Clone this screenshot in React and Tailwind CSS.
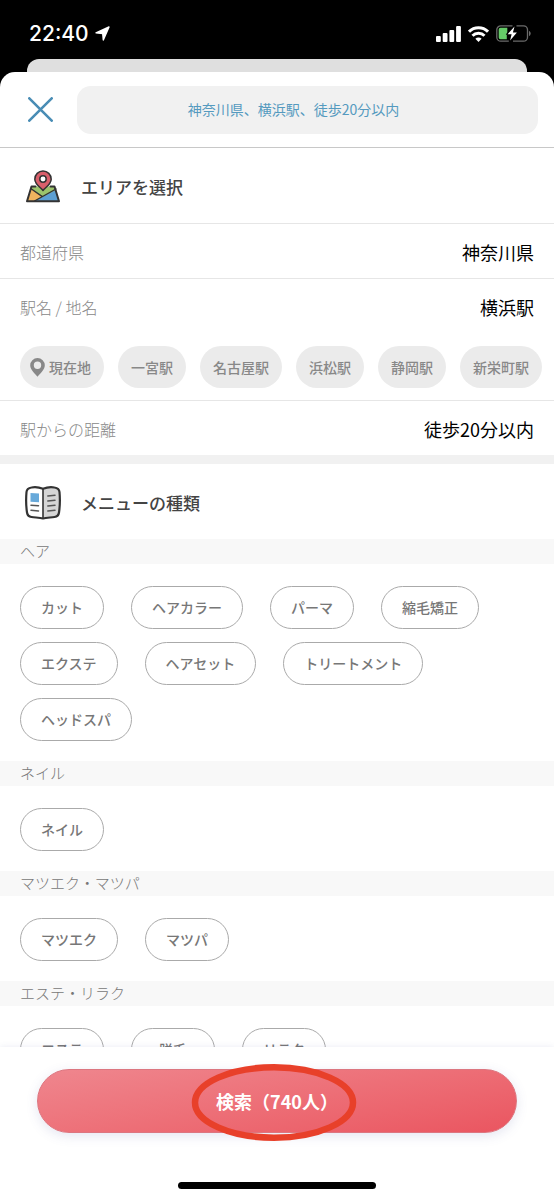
import { useState } from 'react'

const stations = ['一宮駅', '名古屋駅', '浜松駅', '静岡駅', '新栄町駅']

const menus = [
  { name: 'ヘア', items: ['カット', 'ヘアカラー', 'パーマ', '縮毛矯正', 'エクステ', 'ヘアセット', 'トリートメント', 'ヘッドスパ'] },
  { name: 'ネイル', items: ['ネイル'] },
  { name: 'マツエク・マツパ', items: ['マツエク', 'マツパ'] },
  { name: 'エステ・リラク', items: ['エステ', '脱毛', 'リラク'] },
]

function StatusBar() {
  return (
    <div className="h-[59px] shrink-0 flex items-center justify-between pl-[29px] pr-[23px] pt-2 text-white">
      <div className="flex items-center gap-1.5">
        <span className="font-['Inter',sans-serif] text-[21px] leading-6 font-medium">22:40</span>
        <svg width="15" height="15" viewBox="0 0 15 15" fill="currentColor" stroke="currentColor" strokeWidth="1.400" strokeLinejoin="round">
          <path d="M14 1L8.300 14 7.700 7.500 1 6.900z" />
        </svg>
      </div>
      <div className="flex items-center gap-[7px]">
        <svg width="25" height="16" viewBox="0 0 25 16" fill="currentColor">
          <rect x="0" y="10" width="4.800" height="6" rx="1" />
          <rect x="6.700" y="7" width="4.800" height="9" rx="1" />
          <rect x="13.400" y="4" width="4.800" height="12" rx="1" />
          <rect x="20.100" y="0" width="4.800" height="16" rx="1" />
        </svg>
        <svg width="21" height="16" viewBox="0 0 21 16" fill="none" stroke="currentColor" strokeWidth="3">
          <path d="M1 5.700a13.500 13.500 0 0 1 19 0" />
          <path d="M4.500 9.700a8.500 8.500 0 0 1 12 0" />
          <path d="M10.500 16l-3.100-3.200a4.300 4.300 0 0 1 6.200 0z" fill="currentColor" stroke="none" />
        </svg>
        <svg width="35" height="17" viewBox="0 0 35 17" fill="none">
          <path d="M16.500.8H4.800a4 4 0 0 0-4 4v7.400a4 4 0 0 0 4 4h8M20.500.8H27.500a4 4 0 0 1 4 4v7.400a4 4 0 0 1-4 4H17" stroke="#6b6b6b" strokeWidth="1.300" />
          <path d="M33 6v5c1-.3 1.700-1.300 1.700-2.500S34 6.300 33 6z" fill="#6b6b6b" />
          <path d="M4.500 2.700h6.800v4.500l-1.500 2.600h1v4.500H4.500a1.800 1.800 0 0 1-1.800-1.800v-8a1.800 1.800 0 0 1 1.800-1.800z" fill="#65cb68" />
          <path d="M18.500 1.500l-6.900 7.800h4l-1.500 6.200 6.800-8h-4z" fill="#fff" />
        </svg>
      </div>
    </div>
  )
}

function MapIcon() {
  return (
    <svg width="36" height="33" viewBox="0 0 36 33" strokeLinejoin="round" strokeLinecap="round">
      <path d="M6.500 16.500h23l4.500 14.800H2z" fill="#9cc46c" />
      <path d="M5.500 18.500L17 26.500l-8 4.800H2z" fill="#efb35f" />
      <path d="M31 20l3 11.300H9z" fill="#5c9fd3" />
      <path d="M5.700 18.500L17 26.300M31 19L9.500 31" fill="none" stroke="#333" strokeWidth="1.400" />
      <path d="M10.500 16.500h-4L2 31.300h32l-4.500-14.800h-4" fill="none" stroke="#333" strokeWidth="2" />
      <path d="M18 20.500c-1.500-2.300-8.200-6-8.200-11.300a8.200 8.200 0 0 1 16.400 0c0 5.300-6.700 9-8.200 11.300z" fill="#d85f6b" stroke="#333" strokeWidth="1.500" />
      <circle cx="18" cy="9" r="3.200" fill="#fff" stroke="#333" strokeWidth="1.500" />
    </svg>
  )
}

function MagazineIcon() {
  return (
    <svg width="36" height="34" viewBox="0 0 36 34" strokeLinejoin="round" strokeLinecap="round">
      <path d="M18 2.800C14 1.200 9 1 6.500 1.500 3 2 1.700 3.500 1.500 6c-.7 8-.5 14 .5 20.500.4 3 1.500 4 4.500 4.500 4 .6 8 .6 11.500 1.500z" fill="#fff" />
      <path d="M18 2.800c4-1.600 9-1.800 11.500-1.300 3.500.5 4.800 2 5 4.500.7 8 .5 14-.5 20.500-.4 3-1.500 4-4.500 4.500-4 .6-8 .6-11.500 1.500z" fill="#d6d6d6" />
      <path d="M18 2.800C14 1.200 9 1 6.500 1.500 3 2 1.700 3.500 1.500 6c-.7 8-.5 14 .5 20.500.4 3 1.500 4 4.500 4.500 4 .6 8 .6 11.500 1.500 3.500-.9 7.500-.9 11.500-1.500 3-.5 4.100-1.500 4.500-4.500 1-6.500 1.200-12.500.5-20.500-.2-2.500-1.500-4-5-4.500C27 1 22 1.200 18 2.800z" fill="none" stroke="#333" strokeWidth="2.200" />
      <path d="M18 3.500v28.500" stroke="#333" strokeWidth="1.600" />
      <path d="M5.500 7l8.500.5v8.700l-8.500-.5z" fill="#67a9da" />
      <path d="M6 19.200l7.500.6M6 24.300l7.500.6M22.800 10l7.200-.7M22.800 15l7.200-.7M22.800 20l7.200-.7M22.800 25l7.200-.7" stroke="#555" strokeWidth="1.500" />
    </svg>
  )
}

function SectionTitle({ icon, children }) {
  return (
    <div className="h-[75px] flex items-center gap-5 pt-0.5 pl-[25px]">
      {icon}
      <h2 className="text-[17px] leading-6 font-medium text-[#444]">{children}</h2>
    </div>
  )
}

function Row({ label, value }) {
  return (
    <button className="w-full h-[54px] pt-0.5 px-5 flex items-center justify-between">
      <span className="text-base font-light text-[#888]">{label}</span>
      <span className="text-lg text-black">{value}</span>
    </button>
  )
}

function StationChip({ children, icon }) {
  return (
    <button className={`h-[42px] shrink-0 rounded-full bg-[#ebebeb] flex items-center gap-1 text-sm font-medium text-[#888] ${icon ? 'pl-2.5 pr-[13px]' : 'px-[13px]'}`}>
      {icon}
      {children}
    </button>
  )
}

export default function App() {
  const [selected, setSelected] = useState([])

  function toggle(item) {
    setSelected(selected.includes(item) ? selected.filter((s) => s !== item) : [...selected, item])
  }

  return (
    <div className="h-screen flex flex-col bg-black font-['Noto_Sans_CJK_JP',sans-serif]">
      <StatusBar />
      <div className="h-[13px] shrink-0 mx-[27px] rounded-t-[12px] bg-[#dfdfdf]" />

      <div className="flex-1 min-h-0 flex flex-col overflow-hidden rounded-t-[15px] bg-white">
        {/* Header */}
        <header className="h-[76px] shrink-0 flex items-center gap-6 pl-7 pr-4 border-b border-[#c8c8c8]">
          <button aria-label="閉じる">
            <svg width="25" height="25" viewBox="0 0 25 25" fill="none" stroke="#4a8db5" strokeWidth="2.600" strokeLinecap="round">
              <path d="M1.300 1.300l22.400 22.400M23.700 1.300L1.300 23.700" />
            </svg>
          </button>
          <input
            type="text"
            aria-label="検索条件"
            defaultValue="神奈川県、横浜駅、徒歩20分以内"
            className="flex-1 min-w-0 h-12 pr-7 pb-0.5 rounded-[14px] bg-[#f1f1f1] text-center text-sm text-[#559abf] outline-none"
          />
        </header>

        <main className="flex-1 min-h-0 overflow-hidden">
          {/* Area */}
          <section>
            <SectionTitle icon={<MapIcon />}>エリアを選択</SectionTitle>
            <div className="border-t border-[#e6e6e6]">
              <Row label="都道府県" value="神奈川県" />
            </div>
            <div className="border-t border-[#e6e6e6]">
              <Row label="駅名 / 地名" value="横浜駅" />
              <div className="flex gap-3.5 overflow-hidden pl-5 pt-[13px] pb-3">
                <StationChip
                  icon={
                    <svg width="15" height="19" viewBox="0 0 15 19" fill="#888">
                      <path fillRule="evenodd" d="M7.500 0A7.300 7.300 0 0 0 .2 7.300C.2 12 5 15.500 7.500 18.800 10 15.500 14.800 12 14.800 7.300A7.300 7.300 0 0 0 7.500 0zm0 3.600a3.700 3.700 0 1 1 0 7.400 3.700 3.700 0 0 1 0-7.400z" />
                    </svg>
                  }
                >
                  現在地
                </StationChip>
                {stations.map((s) => (
                  <StationChip key={s}>{s}</StationChip>
                ))}
              </div>
            </div>
            <div className="border-t border-[#e6e6e6]">
              <Row label="駅からの距離" value="徒歩20分以内" />
            </div>
          </section>

          <div className="h-[9px] bg-[#f1f1f1]" />

          {/* Menu */}
          <section>
            <SectionTitle icon={<MagazineIcon />}>メニューの種類</SectionTitle>
            {menus.map((m) => (
              <div key={m.name}>
                <h3 className="h-[25px] px-5 bg-[#f8f8f8] text-[15px] leading-6 font-light text-[#777]">{m.name}</h3>
                <div className="flex flex-wrap gap-x-[27px] gap-y-[13px] px-5 pt-[22px] pb-5">
                  {m.items.map((item) => (
                    <button
                      key={item}
                      aria-pressed={selected.includes(item)}
                      onClick={() => toggle(item)}
                      className={`h-[43px] min-w-[84px] px-5 pb-0.5 rounded-full border border-[#aaa] text-sm font-medium text-[#777] ${
                        selected.includes(item) ? 'bg-[#ebebeb]' : 'bg-white'
                      }`}
                    >
                      {item}
                    </button>
                  ))}
                </div>
              </div>
            ))}
          </section>
        </main>

        {/* Search */}
        <footer className="shrink-0 px-[37px] pt-[22px] pb-[11px] bg-white shadow-[0_0_6px_rgba(80,90,160,0.12)]">
          <div className="relative">
            <button className="w-full h-16 rounded-full border border-[#dc7680] bg-linear-170 from-[#ef868e] to-[#ea5560] text-lg font-bold text-white shadow-[0_3px_12px_rgba(80,90,160,0.15)]">
              検索（740人）
            </button>
            <svg className="absolute left-1/2 -translate-x-1/2 -top-1.5 -ml-[3px] pointer-events-none" width="166" height="78" viewBox="0 0 166 78" fill="none">
              <ellipse cx="83" cy="39.500" rx="79" ry="35.200" stroke="#e8402a" strokeWidth="6.500" />
            </svg>
          </div>
          <div className="mt-[49px] mx-auto w-[198px] h-[7px] rounded-full bg-black" />
        </footer>
      </div>
    </div>
  )
}
